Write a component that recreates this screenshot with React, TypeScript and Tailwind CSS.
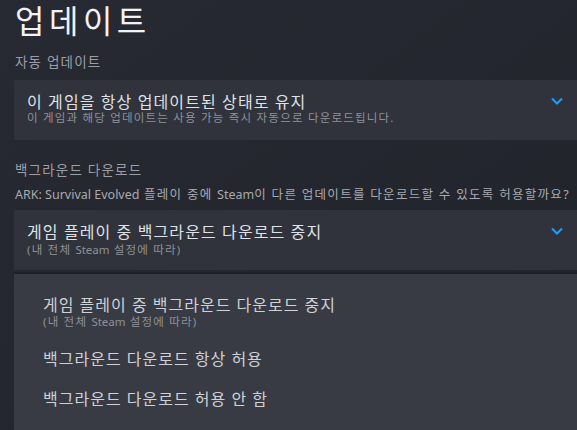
const FONT = { fontFamily: '"Noto Sans", "Noto Sans CJK KR", sans-serif' };

type Option = { title: string; sub?: string };

const BG_OPTIONS: Option[] = [
  { title: "게임 플레이 중 백그라운드 다운로드 중지", sub: "(내 전체 Steam 설정에 따라)" },
  { title: "백그라운드 다운로드 항상 허용" },
  { title: "백그라운드 다운로드 허용 안 함" },
];

// latin words keep normal spacing, hangul gets a little extra
function Latin({ children }: { children: string }) {
  return <span className="tracking-normal">{children}</span>;
}

function Chevron() {
  return (
    <svg width="12" height="8" viewBox="0 0 12 8" className="shrink-0">
      <path d="M1 1.5 L6 6.5 L11 1.5" fill="none" stroke="#1a9fff" strokeWidth="2" />
    </svg>
  );
}

function SelectBox({ title, sub, subGap }: { title: string; sub: React.ReactNode; subGap: string }) {
  return (
    <div className="flex h-[60px] items-start bg-[#30333c] pl-[13px] pr-[14px] pt-[13px]">
      <div className="flex-1">
        <div className="text-[16px] leading-[18px] tracking-[1.1px] text-[#dfe1e4]">{title}</div>
        <div className={`text-[11.5px] leading-[14px] tracking-[1.2px] text-[#8e9198] ${subGap}`}>{sub}</div>
      </div>
      <div className="pt-[4px]">
        <Chevron />
      </div>
    </div>
  );
}

export default function App() {
  return (
    <main
      className="h-[430px] w-[577px] overflow-hidden bg-gradient-to-br from-[#272a32] to-[#20232a] pl-[14px]"
      style={FONT}
    >
      {/* HEADER */}
      <h1 className="pl-[1px] pt-[1px] text-[32px] leading-[40px] tracking-[4.5px] text-[#f2f3f4]">업데이트</h1>

      {/* AUTO UPDATE */}
      <div className="mt-[12px] pl-[1px] text-[13.5px] leading-[18px] tracking-[1.2px] text-[#9b9ea5]">자동 업데이트</div>
      <div className="mt-[9px]">
        <SelectBox
          title="이 게임을 항상 업데이트된 상태로 유지"
          sub="이 게임과 해당 업데이트는 사용 가능 즉시 자동으로 다운로드됩니다."
          subGap=""
        />
      </div>

      {/* BACKGROUND DOWNLOADS */}
      <div className="mt-[21px] pl-[1px] text-[13.5px] leading-[18px] tracking-[1.2px] text-[#9b9ea5]">백그라운드 다운로드</div>
      <div className="mt-[7px] pl-[1px] text-[12.5px] leading-[18px] tracking-[1.3px] whitespace-nowrap text-[#a7aab0]">
        <Latin>ARK: Survival Evolved</Latin> 플레이 중에 <Latin>Steam</Latin>이 다른 업데이트를 다운로드할 수 있도록 허용할까요?
      </div>
      <div className="mt-[6px]">
        <SelectBox
          title="게임 플레이 중 백그라운드 다운로드 중지"
          sub={
            <>
              (내 전체 <Latin>Steam</Latin> 설정에 따라)
            </>
          }
          subGap="mt-[2px]"
        />
      </div>

      {/* DROPDOWN MENU */}
      <div className="mt-[2px] h-[200px] border-t-2 border-[#1e2026] bg-[#383b44] pl-[29px] pt-[21px]">
        {BG_OPTIONS.map((o) => (
          <div key={o.title} className="mb-[20px]">
            <div className="text-[16px] leading-[20px] tracking-[1px] text-[#cfd1d5]">{o.title}</div>
            {o.sub && (
              <div className="text-[11.5px] leading-[14px] tracking-[1.2px] text-[#8e9198]">
                (내 전체 <Latin>Steam</Latin> 설정에 따라)
              </div>
            )}
          </div>
        ))}
      </div>
    </main>
  );
}
